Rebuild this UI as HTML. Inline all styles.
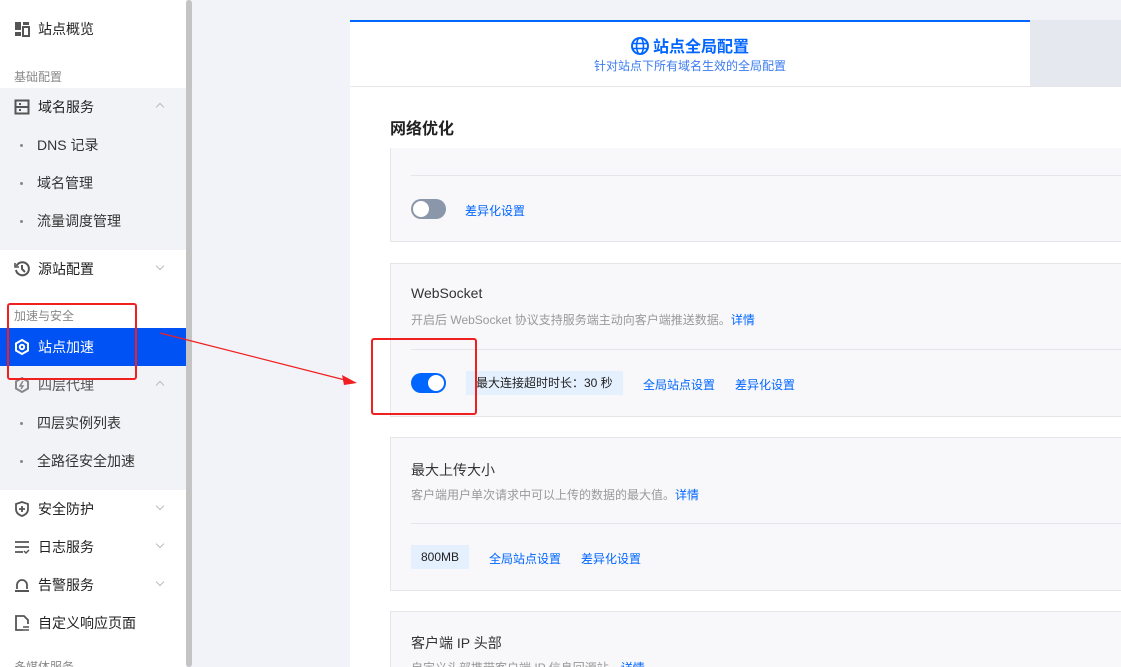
<!DOCTYPE html>
<html style="width:1121px;height:667px;overflow:hidden"><head><meta charset="utf-8"><style>
*{margin:0;padding:0;box-sizing:border-box}
body{width:1121px;height:667px;overflow:hidden;position:relative;background:#f2f3f8;font-family:"Liberation Sans","Noto Sans CJK SC",sans-serif;font-size:14px;color:#222}
.abs{position:absolute}
#side{left:0;top:0;width:186px;height:667px;background:#fff;overflow:hidden}
#sb{left:186px;top:0;width:6px;height:667px;background:#c4c4c4;border-radius:3px}
.it{position:absolute;left:0;width:186px;height:38px;line-height:38px;font-size:14px;color:#222}
.it .t{position:absolute;left:38px}
.it .ic{position:absolute;left:14px;top:11px;width:16px;height:16px}
.sub .t{left:37px;color:#333}
.sub .d{position:absolute;left:20px;top:18px;width:3px;height:3px;background:#888;border-radius:50%}
.grp{position:absolute;left:14px;font-size:12px;color:#888}
.car{position:absolute;left:157px;top:13px;width:6px;height:6px;border-left:1px solid #bbb;border-top:1px solid #bbb}
.up{transform:rotate(45deg);top:16px}
.dn{transform:rotate(225deg)}
.gray{position:absolute;left:0;width:186px;background:#f2f3f7}
.box{position:absolute;left:390px;width:740px;background:#f8f8fa;border:1px solid #e6e6ea}
.hr{position:absolute;left:20px;right:0;height:1px;background:#e6e6ea}
.ttl{position:absolute;left:20px;font-size:14px;color:#333}
.ds{position:absolute;left:20px;font-size:12px;color:#999}
a{color:#0066ff;text-decoration:none;font-size:12px}
.lk{position:absolute;font-size:12px;color:#0066ff}
.tag{position:absolute;background:#e5f0ff;font-size:12px;color:#222;height:24px;line-height:24px;padding:0 10px}
</style></head><body>
<div id="side" class="abs">
 <div class="it" style="top:10px"><svg class="ic" viewBox="0 0 16 16"><g fill="#555"><rect x="1" y="1" width="6" height="8"/><rect x="9" y="1" width="6" height="3"/><rect x="9" y="6" width="6" height="9" fill="none" stroke="#555" stroke-width="2"/><rect x="1" y="11" width="6" height="4"/></g></svg><span class="t">站点概览</span></div>
 <div class="grp" style="top:68px">基础配置</div>
 <div class="gray" style="top:88px;height:162px"></div>
 <div class="it" style="top:88px"><svg class="ic" viewBox="0 0 16 16"><rect x="1.5" y="1.5" width="13" height="13" fill="none" stroke="#555" stroke-width="2"/><path d="M2 8h12M5 5h2M5 11h2" stroke="#555" stroke-width="2"/></svg><span class="t">域名服务</span><i class="car up"></i></div>
 <div class="it sub" style="top:126px"><i class="d"></i><span class="t">DNS 记录</span></div>
 <div class="it sub" style="top:164px"><i class="d"></i><span class="t">域名管理</span></div>
 <div class="it sub" style="top:202px"><i class="d"></i><span class="t">流量调度管理</span></div>
 <div class="it" style="top:250px"><svg class="ic" viewBox="0 0 16 16"><path d="M2.5 5A6.5 6.5 0 1 1 2 9" fill="none" stroke="#555" stroke-width="2"/><path d="M1 2v4h4" fill="none" stroke="#555" stroke-width="1.6"/><path d="M8 4v4l3 3" fill="none" stroke="#555" stroke-width="2"/></svg><span class="t">源站配置</span><i class="car dn"></i></div>
 <div class="grp" style="top:307px">加速与安全</div>
 <div class="it" style="top:328px;background:#0052f5;color:#fff"><svg class="ic" viewBox="0 0 16 16"><path d="M8 1l6 3.5v7L8 15l-6-3.5v-7z" fill="none" stroke="#fff" stroke-width="2"/><circle cx="8" cy="8" r="2.2" fill="none" stroke="#fff" stroke-width="2"/></svg><span class="t" style="color:#fff">站点加速</span></div>
 <div class="gray" style="top:366px;height:124px"></div>
 <div class="it" style="top:366px"><svg class="ic" viewBox="0 0 16 16"><path d="M8 1l6 3.5v7L8 15l-6-3.5v-7z" fill="none" stroke="#888" stroke-width="2"/><path d="M9 4L6 9h3l-2 3" fill="none" stroke="#888" stroke-width="1.5"/></svg><span class="t" style="color:#555">四层代理</span><i class="car up"></i></div>
 <div class="it sub" style="top:404px"><i class="d"></i><span class="t">四层实例列表</span></div>
 <div class="it sub" style="top:442px"><i class="d"></i><span class="t">全路径安全加速</span></div>
 <div class="it" style="top:490px"><svg class="ic" viewBox="0 0 16 16"><path d="M8 1l6 2v5c0 4-3 6-6 7-3-1-6-3-6-7V3z" fill="none" stroke="#555" stroke-width="1.8"/><path d="M8 5v6M5 8h6" stroke="#555" stroke-width="1.8"/></svg><span class="t">安全防护</span><i class="car dn"></i></div>
 <div class="it" style="top:528px"><svg class="ic" viewBox="0 0 16 16"><path d="M1 3h14M1 8h14M1 13h8" stroke="#555" stroke-width="1.8"/><path d="M10 12l2 2 3-3" fill="none" stroke="#555" stroke-width="1.5"/></svg><span class="t">日志服务</span><i class="car dn"></i></div>
 <div class="it" style="top:566px"><svg class="ic" viewBox="0 0 16 16"><path d="M3 12V8a5 5 0 0 1 10 0v4" fill="none" stroke="#555" stroke-width="1.8"/><path d="M1 14h14" stroke="#555" stroke-width="2"/></svg><span class="t">告警服务</span><i class="car dn"></i></div>
 <div class="it" style="top:604px"><svg class="ic" viewBox="0 0 16 16"><path d="M9 15H2V1h8l4 4v4" fill="none" stroke="#555" stroke-width="1.8"/><path d="M9 12h6M9 15h6" stroke="#555" stroke-width="1.5"/></svg><span class="t">自定义响应页面</span></div>
 <div class="grp" style="top:658px">多媒体服务</div>
</div>
<div id="sb" class="abs"></div>

<div class="abs" style="left:350px;top:20px;width:771px;height:647px;background:#fff"></div>
<div class="abs" style="left:350px;top:20px;width:680px;height:2px;background:#0066ff"></div>
<div class="abs" style="left:1030px;top:20px;width:91px;height:66px;background:#e6e8ef"></div>
<div class="abs" style="left:350px;top:86px;width:771px;height:1px;background:#e6e6ea"></div>
<div class="abs" style="left:350px;top:33px;width:680px;text-align:center;font-size:16px;font-weight:bold;color:#0066ff"><svg width="18" height="18" viewBox="0 0 18 18" style="vertical-align:-3px;margin-right:4px"><circle cx="9" cy="9" r="8" fill="none" stroke="#0066ff" stroke-width="2"/><ellipse cx="9" cy="9" rx="3.5" ry="8" fill="none" stroke="#0066ff" stroke-width="1.6"/><path d="M1 6.5h16M1 11.5h16" stroke="#0066ff" stroke-width="1.6"/></svg>站点全局配置</div>
<div class="abs" style="left:350px;top:57px;width:680px;text-align:center;font-size:12px;color:#3a7bf0">针对站点下所有域名生效的全局配置</div>

<div class="box" style="top:120px;height:122px"><div class="hr" style="top:54px"></div>
 <div class="abs" style="left:20px;top:78px;width:35px;height:20px;border-radius:10px;background:#8a96aa"><div class="abs" style="left:2px;top:2px;width:16px;height:16px;border-radius:50%;background:#fff"></div></div>
 <span class="lk" style="left:74px;top:81px">差异化设置</span></div>
<div class="abs" style="left:350px;top:87px;width:771px;height:61px;background:#fff"></div>
<div class="abs" style="left:390px;top:115px;font-size:16px;font-weight:bold;color:#222">网络优化</div>

<div class="box" style="top:263px;height:154px">
 <div class="ttl" style="top:21px">WebSocket</div>
 <div class="ds" style="top:47px">开启后 WebSocket 协议支持服务端主动向客户端推送数据。<a>详情</a></div>
 <div class="hr" style="top:85px"></div>
 <div class="abs" style="left:20px;top:109px;width:35px;height:20px;border-radius:10px;background:#0066ff"><div class="abs" style="left:17px;top:2px;width:16px;height:16px;border-radius:50%;background:#fff"></div></div>
 <div class="tag" style="left:75px;top:107px;padding:0 10px 0 10px">最大连接超时时长：30 秒</div>
 <span class="lk" style="left:252px;top:112px">全局站点设置</span>
 <span class="lk" style="left:344px;top:112px">差异化设置</span>
</div>
<div class="box" style="top:437px;height:154px">
 <div class="ttl" style="top:22px">最大上传大小</div>
 <div class="ds" style="top:48px">客户端用户单次请求中可以上传的数据的最大值。<a>详情</a></div>
 <div class="hr" style="top:85px"></div>
 <div class="tag" style="left:20px;top:107px">800MB</div>
 <span class="lk" style="left:98px;top:112px">全局站点设置</span>
 <span class="lk" style="left:190px;top:112px">差异化设置</span>
</div>
<div class="box" style="top:611px;height:56px;border-bottom:none;overflow:hidden">
 <div class="ttl" style="top:21px">客户端 IP 头部</div>
 <div class="ds" style="top:47px">自定义头部携带客户端 IP 信息回源站。<a>详情</a></div>
</div>

<div class="abs" style="left:7px;top:303px;width:130px;height:77px;border:2px solid #f02020;border-radius:3px"></div>
<div class="abs" style="left:371px;top:338px;width:106px;height:77px;border:2px solid #f02020;border-radius:3px"></div>
<svg class="abs" style="left:0;top:0" width="1121" height="667"><line x1="160" y1="333" x2="345" y2="380" stroke="#f02020" stroke-width="1.3"/><path d="M357 383l-15-8 2 10z" fill="#f02020"/></svg>
</body></html>
